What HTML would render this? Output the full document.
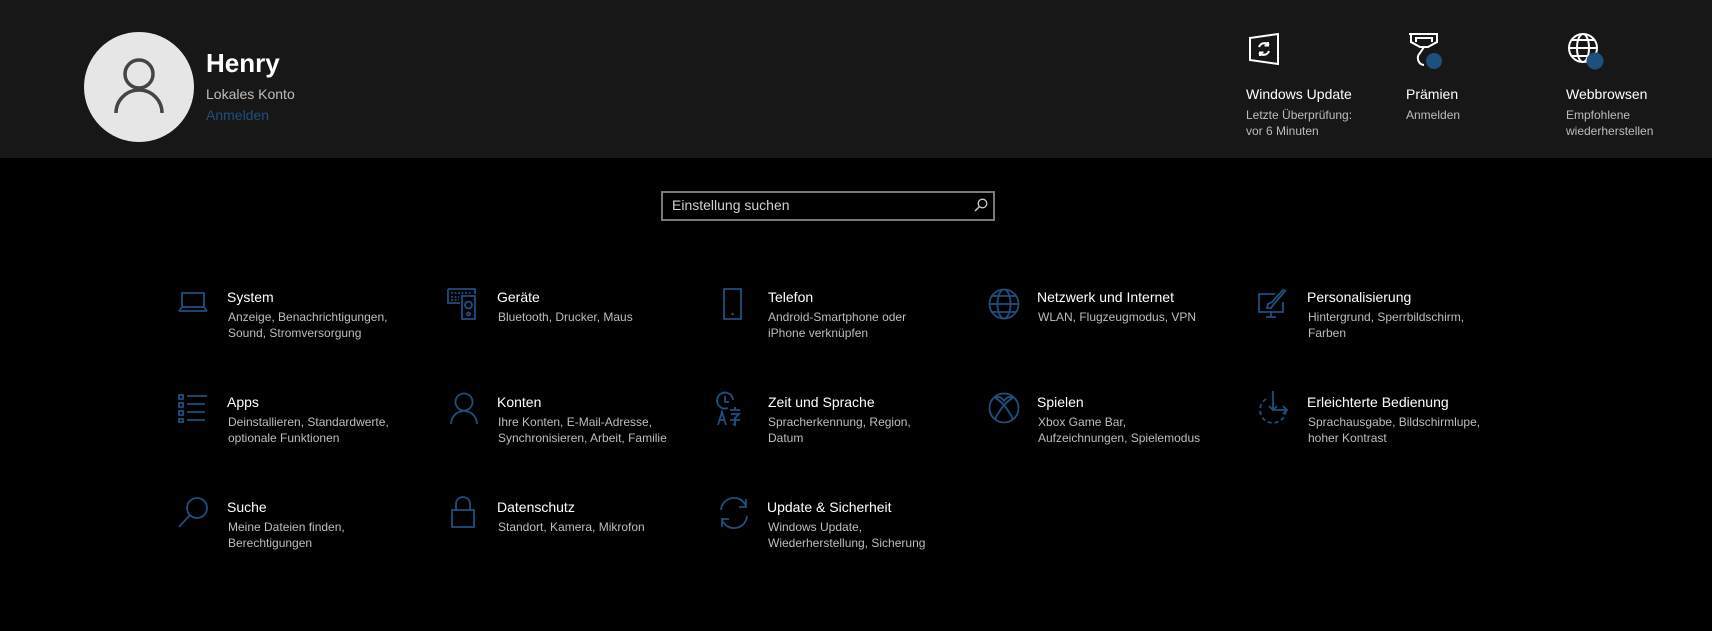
<!DOCTYPE html>
<html><head><meta charset="utf-8"><style>
*{margin:0;padding:0;box-sizing:border-box}
body{width:1712px;height:631px;background:#000;font-family:"Liberation Sans",sans-serif;position:relative;overflow:hidden;color:#fff}
.hdr{position:absolute;left:0;top:0;width:1712px;height:158px;background:#171717}
.abs{position:absolute;white-space:nowrap}
.t{font-size:14px;color:#fff}
.d{font-size:12px;color:#bdbdbd;line-height:16px}
svg{position:absolute;overflow:visible}
.ic{fill:none;stroke:#1f4f7d;stroke-width:1.8}
.wi{fill:none;stroke:#fff;stroke-width:2}
</style></head><body>
<div class="hdr"></div>
<div class="abs" style="left:84px;top:32px;width:110px;height:110px;border-radius:50%;background:#e6e6e6"></div>
<svg style="left:114px;top:58px" width="50" height="58" viewBox="0 0 50 58"><circle cx="25" cy="16" r="14" fill="none" stroke="#444" stroke-width="3.5"/><path d="M2 55 A23 23 0 0 1 48 55" fill="none" stroke="#444" stroke-width="3.5"/></svg>
<div class="abs" style="left:206px;top:48px;font-size:26px;font-weight:bold">Henry</div>
<div class="abs" style="left:206px;top:86px;font-size:14px;color:#bdbdbd">Lokales Konto</div>
<div class="abs" style="left:206px;top:107px;font-size:14px;color:#1f4f7d">Anmelden</div>

<svg style="left:1248px;top:33px" width="32" height="32" viewBox="0 0 32 32"><path class="wi" d="M2 5 L30 1 V31 L2 27 Z"/><path class="wi" stroke-width="1.8" d="M11 14 A6 6 0 0 1 21 12 M21 18 A6 6 0 0 1 11 20 M20 9 V12.5 H16.5 M12 23 V19.5 H15.5"/></svg>
<div class="abs t" style="left:1246px;top:86px">Windows Update</div>
<div class="abs d" style="left:1246px;top:107px">Letzte Überprüfung:<br>vor 6 Minuten</div>

<svg style="left:1408px;top:33px" width="36" height="38" viewBox="0 0 36 38"><path class="wi" d="M1 1 H29 V9 L20 14 H12 L3 9 V1 Z M8 9 V5 H24 V9"/><path class="wi" d="M16 14 L12 20 A7 7 0 0 0 16 32"/><circle cx="26" cy="28" r="8" fill="#1f4f7d"/></svg>
<div class="abs t" style="left:1406px;top:86px">Prämien</div>
<div class="abs d" style="left:1406px;top:107px">Anmelden</div>

<svg style="left:1568px;top:33px" width="40" height="40" viewBox="0 0 40 40"><circle class="wi" cx="15" cy="15" r="14"/><ellipse class="wi" cx="15" cy="15" rx="6" ry="14"/><path class="wi" d="M1 15 H29 M4 7 H26 M4 23 H26"/><circle cx="27" cy="28" r="8.5" fill="#1f4f7d"/></svg>
<div class="abs t" style="left:1566px;top:86px">Webbrowsen</div>
<div class="abs d" style="left:1566px;top:107px">Empfohlene<br>wiederherstellen</div>

<div class="abs" style="left:661px;top:191px;width:334px;height:30px;border:2px solid #7a7a7a"></div>
<div class="abs" style="left:672px;top:197px;font-size:14px;color:#cfcfcf">Einstellung suchen</div>
<svg style="left:974px;top:198px" width="14" height="14" viewBox="0 0 14 14"><circle cx="8.5" cy="5.5" r="4.3" fill="none" stroke="#ccc" stroke-width="1.3"/><path d="M5.5 8.5 L1 13" stroke="#ccc" stroke-width="1.4"/></svg>

<!-- Row 1 -->
<svg style="left:178px;top:291px" width="30" height="24" viewBox="0 0 30 24"><path class="ic" d="M4 2 H26 V16 H4 Z M1 20 L4 16 M29 20 L26 16 M1 20 H29"/></svg>
<div class="abs t" style="left:227px;top:289px">System</div>
<div class="abs d" style="left:228px;top:309px">Anzeige, Benachrichtigungen,<br>Sound, Stromversorgung</div>

<svg style="left:447px;top:288px" width="30" height="32" viewBox="0 0 30 32"><path class="ic" d="M1 1 H28 V6 M1 1 V15 H13"/><path class="ic" d="M15 8 H28 V31 H15 Z"/><circle class="ic" cx="21.5" cy="17" r="3.5"/><circle class="ic" cx="21.5" cy="26" r="1.5"/><path class="ic" stroke-dasharray="2 1.5" d="M4 5 H24 M4 9 H12 M4 12 H12"/></svg>
<div class="abs t" style="left:497px;top:289px">Geräte</div>
<div class="abs d" style="left:498px;top:309px">Bluetooth, Drucker, Maus</div>

<svg style="left:722px;top:288px" width="22" height="32" viewBox="0 0 22 32"><path class="ic" d="M2 1 H19 V31 H2 Z"/><circle cx="10.5" cy="26" r="1.3" fill="#1f4f7d"/></svg>
<div class="abs t" style="left:768px;top:289px">Telefon</div>
<div class="abs d" style="left:768px;top:309px">Android-Smartphone oder<br>iPhone verknüpfen</div>

<svg style="left:988px;top:288px" width="32" height="32" viewBox="0 0 32 32"><circle class="ic" cx="16" cy="16" r="14.5"/><ellipse class="ic" cx="16" cy="16" rx="6.5" ry="14.5"/><path class="ic" d="M1.5 16 H30.5 M4 8 H28 M4 24 H28"/></svg>
<div class="abs t" style="left:1037px;top:289px">Netzwerk und Internet</div>
<div class="abs d" style="left:1038px;top:309px">WLAN, Flugzeugmodus, VPN</div>

<svg style="left:1257px;top:288px" width="32" height="32" viewBox="0 0 32 32"><path class="ic" d="M18 6 H2 V24 H26 V14 M14 24 V29 M9 29 H19"/><path class="ic" d="M29 2 L17 16 L14 20 L10 20 L11 16 L15 14 L27 1"/></svg>
<div class="abs t" style="left:1307px;top:289px">Personalisierung</div>
<div class="abs d" style="left:1308px;top:309px">Hintergrund, Sperrbildschirm,<br>Farben</div>

<!-- Row 2 -->
<svg style="left:178px;top:393px" width="30" height="30" viewBox="0 0 30 30"><path class="ic" d="M1 2 H5 V6 H1 Z M1 10 H5 V14 H1 Z M1 18 H5 V22 H1 Z M1 26 H5 V29 H1 Z"/><path class="ic" d="M9 3 H29 M9 11 H27 M9 19 H27 M9 27 H27"/></svg>
<div class="abs t" style="left:227px;top:394px">Apps</div>
<div class="abs d" style="left:228px;top:414px">Deinstallieren, Standardwerte,<br>optionale Funktionen</div>

<svg style="left:449px;top:392px" width="30" height="34" viewBox="0 0 30 34"><circle class="ic" cx="15" cy="10" r="8.5"/><path class="ic" d="M2 32 A13 13 0 0 1 28 32"/></svg>
<div class="abs t" style="left:497px;top:394px">Konten</div>
<div class="abs d" style="left:498px;top:414px">Ihre Konten, E-Mail-Adresse,<br>Synchronisieren, Arbeit, Familie</div>

<svg style="left:716px;top:392px" width="34" height="34" viewBox="0 0 34 34"><path class="ic" d="M12 16 A8 8 0 1 1 17 8 M9 4 V10 H13"/><path class="ic" d="M2 33 L6 20 L10 33 M3.5 28 H8.5 M14 18 H24 M19 15 V18 M15 22 H23 L19 26 V33 L17 32 M14 28 H24"/></svg>
<div class="abs t" style="left:768px;top:394px">Zeit und Sprache</div>
<div class="abs d" style="left:768px;top:414px">Spracherkennung, Region,<br>Datum</div>

<svg style="left:988px;top:392px" width="32" height="32" viewBox="0 0 32 32"><circle class="ic" cx="16" cy="16" r="14.5"/><path class="ic" d="M7 6 Q16 10 25 27 M25 6 Q16 10 7 27 M7 6 Q12 3 16 9 Q20 3 25 6"/></svg>
<div class="abs t" style="left:1037px;top:394px">Spielen</div>
<div class="abs d" style="left:1038px;top:414px">Xbox Game Bar,<br>Aufzeichnungen, Spielemodus</div>

<svg style="left:1258px;top:390px" width="34" height="36" viewBox="0 0 34 36"><path class="ic" stroke-dasharray="4 3" d="M8 9 A13 13 0 1 0 28 20"/><path class="ic" d="M15 1 V20 H29 M25 16 L29 20 L25 24 M11 16 L15 20 L19 16"/></svg>
<div class="abs t" style="left:1307px;top:394px">Erleichterte Bedienung</div>
<div class="abs d" style="left:1308px;top:414px">Sprachausgabe, Bildschirmlupe,<br>hoher Kontrast</div>

<!-- Row 3 -->
<svg style="left:178px;top:496px" width="32" height="32" viewBox="0 0 32 32"><circle class="ic" cx="19" cy="12" r="10"/><path class="ic" d="M12 19 L1 31"/></svg>
<div class="abs t" style="left:227px;top:499px">Suche</div>
<div class="abs d" style="left:228px;top:519px">Meine Dateien finden,<br>Berechtigungen</div>

<svg style="left:451px;top:496px" width="26" height="32" viewBox="0 0 26 32"><path class="ic" d="M1 14 H23 V31 H1 Z M5 14 V8 A7 7 0 0 1 19 8 V14"/></svg>
<div class="abs t" style="left:497px;top:499px">Datenschutz</div>
<div class="abs d" style="left:498px;top:519px">Standort, Kamera, Mikrofon</div>

<svg style="left:717px;top:496px" width="34" height="34" viewBox="0 0 34 34"><path class="ic" d="M4 14 A13 13 0 0 1 29 10 M29 3 V11 H22"/><path class="ic" d="M30 20 A13 13 0 0 1 5 24 M5 31 V23 H12"/></svg>
<div class="abs t" style="left:767px;top:499px">Update &amp; Sicherheit</div>
<div class="abs d" style="left:768px;top:519px">Windows Update,<br>Wiederherstellung, Sicherung</div>
</body></html>
